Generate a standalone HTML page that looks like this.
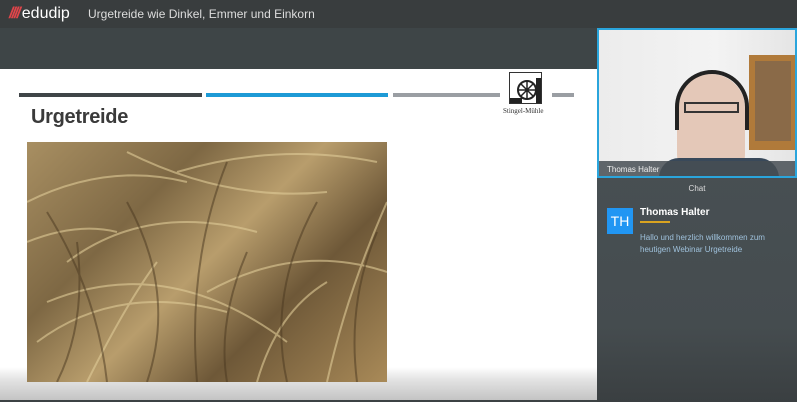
<!DOCTYPE html>
<html><head><style>
*{margin:0;padding:0;box-sizing:border-box}
body{width:797px;height:402px;overflow:hidden;background:#3c4244;font-family:"Liberation Sans",sans-serif;position:relative}
.hdr{position:absolute;left:0;top:0;width:797px;height:28px;background:#393d3e}
.logo{position:absolute;left:9px;top:5px;color:#fff;font-size:16px}
.logo b{color:#e0454a;font-weight:bold;font-style:italic;letter-spacing:-2px;margin-right:3px}
.title{position:absolute;left:88px;top:7px;color:#ddd;font-size:12px}
.band{position:absolute;left:0;top:28px;width:597px;height:41px;background:#3e4547}
.slide{position:absolute;left:0;top:69px;width:597px;height:331px;background:linear-gradient(#fff 0,#fff 298px,#e4e4e4 310px,#c4c4c4 331px)}
.bar{position:absolute;top:24px;height:4px}
.right{position:absolute;left:597px;top:28px;width:200px;height:374px;background:linear-gradient(#4a5256,#454c4f 80%,#3a3f41)}
.cam{position:absolute;left:0;top:0;width:200px;height:150px;border:2px solid #2aa5dc;background:linear-gradient(90deg,#ececec,#f3f3f3 60%,#e5e5e5);overflow:hidden}
</style></head><body>
<div class="hdr"><div class="logo"><b>////</b>edudip</div><div class="title">Urgetreide wie Dinkel, Emmer und Einkorn</div></div>
<div class="band"></div>
<div class="slide">
<div class="bar" style="left:19px;width:183px;background:#3f4548"></div>
<div class="bar" style="left:206px;width:182px;background:#1d9ad6"></div>
<div class="bar" style="left:393px;width:107px;background:#9a9ea3"></div>
<div class="bar" style="left:552px;width:22px;background:#9a9ea3"></div>
<div style="position:absolute;left:509px;top:3px;width:33px;height:32px;border:1px solid #333;background:#fff">
<svg width="31" height="30" viewBox="0 0 31 30"><circle cx="17" cy="17" r="9" fill="none" stroke="#222" stroke-width="2"/><path d="M17 8V26M8 17H26M11 11L23 23M23 11L11 23" stroke="#222" stroke-width="1.5"/><rect x="0" y="25" width="12" height="5" fill="#222"/><rect x="26" y="5" width="5" height="25" fill="#222"/></svg></div>
<div style="position:absolute;left:503px;top:38px;font-family:'Liberation Serif',serif;font-size:7px;color:#333">Stingel-Mühle</div>
<div style="position:absolute;left:31px;top:37px;font-size:20px;font-weight:bold;color:#3a3a3a;letter-spacing:-0.3px">Urgetreide</div>
<div style="position:absolute;left:27px;top:73px;width:360px;height:240px;background:linear-gradient(135deg,#a88f62,#7e6844 30%,#b89d6c 50%,#6e5838 70%,#a98a58);overflow:hidden">
<svg width="360" height="240" style="position:absolute;left:0;top:0">
<g stroke="#e0cc98" stroke-width="2" fill="none" opacity=".6">
<path d="M0 60Q80 20 160 40"/><path d="M40 120Q120 60 230 90"/><path d="M150 30Q250 0 350 20"/><path d="M10 200Q90 140 200 170"/><path d="M180 150Q270 100 360 130"/><path d="M60 240Q100 160 130 120"/><path d="M230 240Q250 170 300 140"/><path d="M0 100Q50 80 90 90"/><path d="M100 10Q200 60 300 50"/><path d="M20 160Q140 110 260 200"/><path d="M300 240Q320 150 360 60"/>
</g>
<g stroke="#4a3820" stroke-width="2" fill="none" opacity=".5">
<path d="M30 240Q60 180 50 100"/><path d="M120 240Q150 150 100 60"/><path d="M260 240Q240 150 290 60"/><path d="M330 240Q320 160 350 90"/><path d="M200 240Q190 180 220 110"/><path d="M170 240Q160 120 200 20"/><path d="M80 240Q70 150 20 70"/>
</g></svg></div>
</div>
<div class="right">
<div class="cam">
<div style="position:absolute;left:150px;top:25px;width:48px;height:95px;background:#b07a3a"><div style="margin:6px;height:80px;background:#8a6a48"></div></div>
<div style="position:absolute;left:78px;top:44px;width:68px;height:110px;border-radius:34px 34px 30px 30px;background:#e4c8b8"></div>
<div style="position:absolute;left:76px;top:40px;width:74px;height:60px;border:4px solid #222;border-bottom:none;border-radius:37px 37px 0 0"></div>
<div style="position:absolute;left:85px;top:72px;width:55px;height:11px;border:2px solid #333"></div>
<div style="position:absolute;left:60px;top:128px;width:120px;height:30px;background:#39495a;border-radius:20px 20px 0 0"></div>
<div style="position:absolute;left:0;top:131px;width:196px;height:17px;background:rgba(70,78,84,.85);color:#eee;font-size:8px;padding:4px 0 0 8px">Thomas Halter</div>
</div>
<div style="position:absolute;left:0;top:156px;width:200px;text-align:center;color:#ddd;font-size:8px">Chat</div>
<div style="position:absolute;left:10px;top:180px;width:26px;height:26px;background:#2196f3;color:#fff;font-size:14px;text-align:center;line-height:26px">TH</div>
<div style="position:absolute;left:43px;top:179px;color:#fff;font-size:10px;font-weight:bold">Thomas Halter</div>
<div style="position:absolute;left:43px;top:193px;width:30px;height:2px;background:#d9a320"></div>
<div style="position:absolute;left:43px;top:204px;color:#9fc2dc;font-size:8px;line-height:12px">Hallo und herzlich willkommen zum<br>heutigen Webinar Urgetreide</div>
</div>
</body></html>
